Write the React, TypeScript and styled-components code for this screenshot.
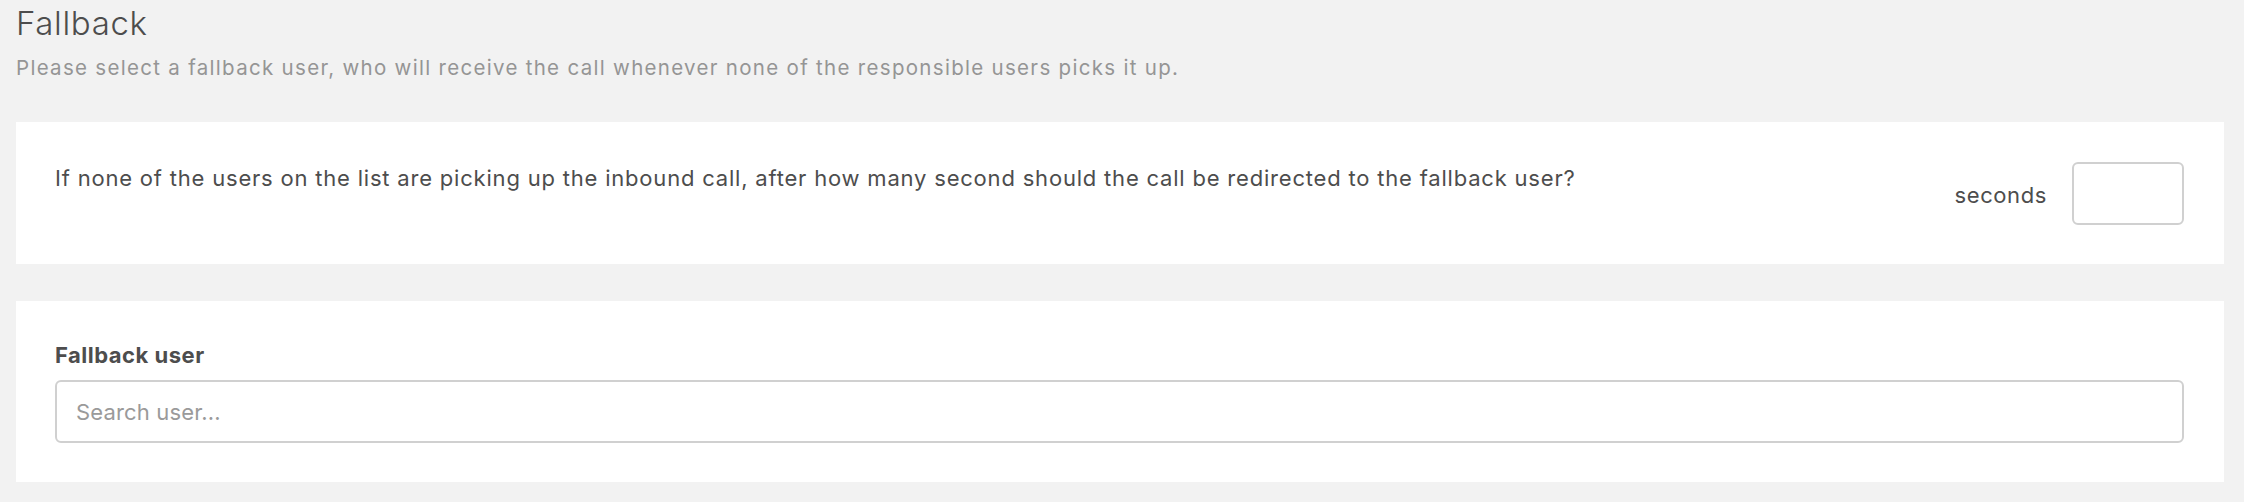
import React from "react";
import styled, { createGlobalStyle } from "styled-components";

const GlobalStyle = createGlobalStyle`
  html, body {
    margin: 0;
    padding: 0;
    background: #f2f2f2;
  }
  body {
    font-family: Inter, "Open Sans", "Liberation Sans", sans-serif;
    color: #4d4d4d;
  }
  * { box-sizing: border-box; }
`;

const Page = styled.div`
  padding: 3px 20px 20px 16px;
`;

const Header = styled.header`
  display: flex;
  flex-direction: column;
  gap: 10px;
  margin-bottom: 39px;
`;

const Title = styled.h1`
  margin: 0;
  font-size: 33px;
  line-height: 40px;
  font-weight: 300;
  color: #4d4d4d;
  letter-spacing: 0.65px;
`;

const Subtitle = styled.p`
  margin: 0;
  font-size: 20.5px;
  line-height: 30px;
  font-weight: 400;
  color: #959595;
  letter-spacing: 1.3px;
`;

const Card = styled.section<{ $gapAfter?: number }>`
  background: #ffffff;
  padding: 38px 40px 39px 39px;
  margin-bottom: ${(p) => p.$gapAfter ?? 0}px;
`;

const Row = styled.div`
  display: flex;
  justify-content: space-between;
  align-items: flex-start;
  gap: 24px;
  padding-top: 2px;
`;

const Question = styled.p`
  margin: 0;
  font-size: 22px;
  line-height: 33px;
  font-weight: 400;
  color: #4d4d4d;
  letter-spacing: 0.8px;
`;

const SecondsGroup = styled.div`
  display: flex;
  align-items: center;
  gap: 25px;
`;

const Unit = styled.span`
  font-size: 22px;
  line-height: 33px;
  color: #4d4d4d;
  padding-top: 3px;
  letter-spacing: 0.6px;
`;

const TextInput = styled.input<{ $width?: string }>`
  display: block;
  width: ${(p) => p.$width ?? "100%"};
  height: 63px;
  border: 2px solid #d0d0d0;
  border-radius: 6px;
  background: #fff;
  padding: 0 19px;
  font-family: inherit;
  font-size: 22px;
  color: #4d4d4d;
  outline: none;
  letter-spacing: 0.15px;

  &::placeholder {
    color: #9a9a9a;
    font-weight: 400;
  }
`;

const Label = styled.label`
  display: block;
  font-size: 22px;
  line-height: 33px;
  font-weight: 700;
  color: #4d4d4d;
  margin: 0 0 8px 0;
  letter-spacing: 0.5px;
`;

export default function App() {
  return (
    <>
      <GlobalStyle />
      <Page>
        <Header>
          <Title>Fallback</Title>
          <Subtitle>
            Please select a fallback user, who will receive the call whenever none of the responsible users picks it up.
          </Subtitle>
        </Header>

        <Card $gapAfter={37}>
          <Row>
            <Question>
              If none of the users on the list are picking up the inbound call, after how many second should the call be redirected to the fallback user?
            </Question>
            <SecondsGroup>
              <Unit>seconds</Unit>
              <TextInput $width="112px" type="text" aria-label="seconds" />
            </SecondsGroup>
          </Row>
        </Card>

        <Card>
          <Label htmlFor="fallback-user">Fallback user</Label>
          <TextInput id="fallback-user" type="text" placeholder="Search user..." />
        </Card>
      </Page>
    </>
  );
}
